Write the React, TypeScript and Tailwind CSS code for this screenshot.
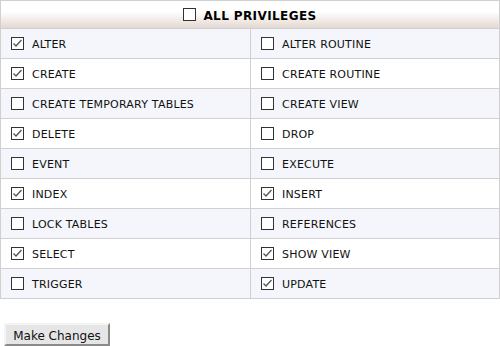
import React from 'react';

const rows: [string, boolean, string, boolean][] = [
  ['ALTER', true, 'ALTER ROUTINE', false],
  ['CREATE', true, 'CREATE ROUTINE', false],
  ['CREATE TEMPORARY TABLES', false, 'CREATE VIEW', false],
  ['DELETE', true, 'DROP', false],
  ['EVENT', false, 'EXECUTE', false],
  ['INDEX', true, 'INSERT', true],
  ['LOCK TABLES', false, 'REFERENCES', false],
  ['SELECT', true, 'SHOW VIEW', true],
  ['TRIGGER', false, 'UPDATE', true],
];

function Box({ checked }: { checked: boolean }) {
  return (
    <span className="inline-flex w-[13px] h-[13px] shrink-0 border border-[#333] bg-white items-center justify-center">
      {checked && (
        <svg width="11" height="11" viewBox="0 0 11 11">
          <path d="M1.5 5.5 L4 8 L9.5 2" fill="none" stroke="#555" strokeWidth="1.3" />
        </svg>
      )}
    </span>
  );
}

function Cell({ label, checked, right }: { label: string; checked: boolean; right?: boolean }) {
  return (
    <div className={`flex items-center gap-[8px] h-[29px] pl-[10px] ${right ? 'border-l border-[#d0d0d0]' : ''}`}>
      <Box checked={checked} />
      <span className="pt-[3px] text-[11px] text-[#111] tracking-[0.2px]">{label}</span>
    </div>
  );
}

export default function App() {
  return (
    <div className="w-[500px] h-[346px] bg-white font-['DejaVu_Sans',sans-serif]">
      <div className="border border-[#d0d0d0] border-b-0">
        <div className="h-[27px] flex items-center justify-center gap-[7px] bg-gradient-to-b from-white from-40% to-[#e4d8d1]">
          <Box checked={false} />
          <span className="pt-[2px] text-[12px] font-bold text-black tracking-[0.4px]">ALL PRIVILEGES</span>
        </div>
        {rows.map(([a, ac, b, bc], i) => (
          <div
            key={a}
            className={`grid grid-cols-[249px_1fr] border-t border-[#d0d0d0] ${i === rows.length - 1 ? 'border-b' : ''} ${i % 2 === 0 ? 'bg-[#f4f6fb]' : 'bg-white'}`}
          >
            <Cell label={a} checked={ac} />
            <Cell label={b} checked={bc} right />
          </div>
        ))}
      </div>
      <div className="pt-[24px] pl-[4px]">
        <button className="h-[23px] w-[106px] pt-[2px] bg-[#e6e6e6] text-[12px] text-[#111] border-[2px] border-t-[#f4f4f4] border-l-[#f4f4f4] border-r-[#8a8a8a] border-b-[#8a8a8a] font-['DejaVu_Sans',sans-serif]">
          Make Changes
        </button>
      </div>
    </div>
  );
}
